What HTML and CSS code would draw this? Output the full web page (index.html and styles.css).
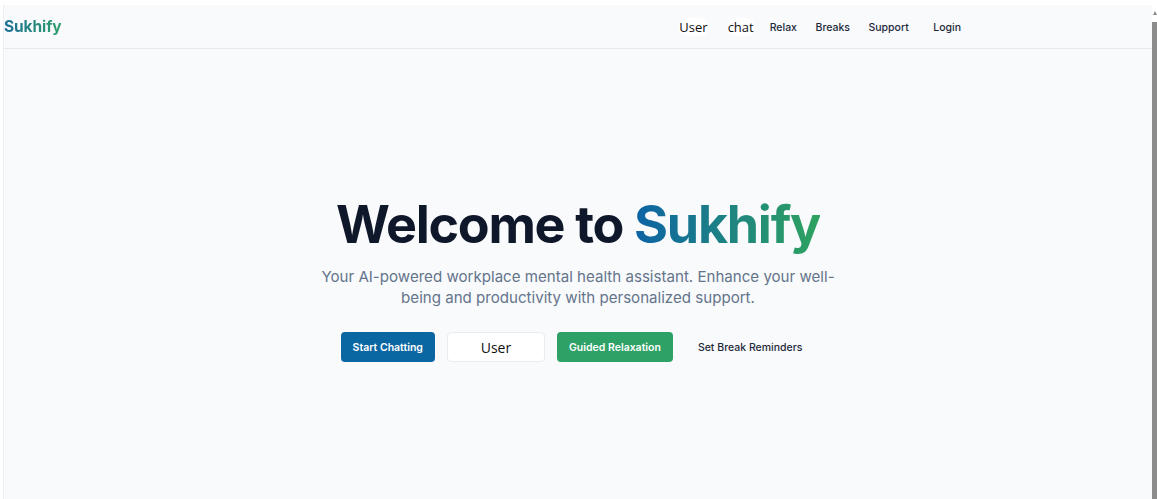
FILE: index.html
```html
<!DOCTYPE html>
<html lang="en">
<head>
<meta charset="utf-8">
<title>Sukhify</title>
<link rel="stylesheet" href="styles.css">
</head>
<body>
<div class="window">
  <div class="page">
    <header class="topbar">
      <a class="logo" href="#">Sukhify</a>
      <nav class="nav">
        <span class="nav-raw">User</span>
        <span class="nav-raw">chat</span>
        <a class="nav-link" href="#">Relax</a>
        <a class="nav-link" href="#">Breaks</a>
        <a class="nav-link" href="#">Support</a>
        <a class="nav-link nav-login" href="#">Login</a>
      </nav>
    </header>
    <main class="hero">
      <h1 class="title">Welcome to <span class="brand">Sukhify</span></h1>
      <p class="lead">Your AI-powered workplace mental health assistant. Enhance your well-being and productivity with personalized support.</p>
      <div class="actions">
        <a class="btn btn-blue" href="#">Start Chatting</a>
        <span class="btn btn-outline"><span class="raw">User</span></span>
        <a class="btn btn-green" href="#">Guided Relaxation</a>
        <a class="btn btn-ghost" href="#">Set Break Reminders</a>
      </div>
    </main>
  </div>
  <div class="scrollbar"><span class="arrow"></span><span class="thumb"></span></div>
</div>
</body>
</html>
```

FILE: styles.css
```css
* { box-sizing: border-box; }
html, body { margin: 0; padding: 0; height: 100%; }
body {
  background: #ffffff;
  font-family: Inter, "Noto Sans", sans-serif;
  overflow: hidden;
}
.window {
  display: flex;
  height: 494px;
  margin-top: 5px;
  padding-left: 3px;
}
.page {
  flex: 1;
  background: #f8fafc;
  border-left: 1px solid #eceef1;
  display: flex;
  flex-direction: column;
}
.topbar {
  height: 44px;
  border-bottom: 1px solid #e6e9ee;
  display: flex;
  align-items: center;
  padding-right: 191px;
}
.logo {
  font-size: 15.5px;
  font-weight: 700;
  text-decoration: none;
  background: linear-gradient(90deg, #1b6e95, #2f9e6b);
  -webkit-background-clip: text;
  background-clip: text;
  color: transparent;
  letter-spacing: -0.1px;
}
.nav {
  margin-left: auto;
  display: flex;
  align-items: center;
  padding-top: 1px;
}
.nav-raw {
  font-family: "Open Sans", "Noto Sans", sans-serif;
  font-size: 13px;
  color: #111;
  background: #fff;
  border-radius: 8px;
  margin-right: 20px;
}
.nav-raw + .nav-raw { margin-right: 16px; }
.nav-link {
  font-size: 10.5px;
  font-weight: 500;
  color: #1e293b;
  text-decoration: none;
  margin-right: 18.5px;
}
.nav-login { margin-left: 6px; margin-right: 0; }
.hero {
  flex: 1;
  display: flex;
  flex-direction: column;
  align-items: center;
  padding-top: 150px;
}
.title {
  margin: 0;
  font-size: 52px;
  line-height: 1;
  font-weight: 700;
  letter-spacing: -1.3px;
  color: #0f172a;
}
.brand {
  background: linear-gradient(90deg, #0d63a5, #2ea35f);
  -webkit-background-clip: text;
  background-clip: text;
  color: transparent;
}
.lead {
  margin: 15px 0 0;
  max-width: 525px;
  text-align: center;
  font-size: 15.1px;
  line-height: 21px;
  color: #64748b;
}
.actions {
  margin-top: 24px;
  display: flex;
  gap: 12px;
}
.btn {
  height: 30px;
  padding: 0 12px;
  display: inline-flex;
  align-items: center;
  justify-content: center;
  border-radius: 4px;
  font-size: 10.5px;
  font-weight: 600;
  text-decoration: none;
}
.btn-blue { background: #0b67a1; color: #fff; }
.btn-green { background: #2ea166; color: #fff; }
.btn-outline {
  width: 98px;
  background: #fff;
  border: 1px solid #e8ebef;
}
.btn-outline .raw {
  font-family: "Open Sans", "Noto Sans", sans-serif;
  font-size: 14px;
  font-weight: 400;
  color: #111;
}
.btn-ghost { color: #1e293b; font-weight: 500; padding: 0 13px; }
.scrollbar {
  width: 5px;
  display: flex;
  flex-direction: column;
  align-items: stretch;
  padding-top: 6px;
}
.arrow {
  width: 0;
  height: 0;
  border-left: 2px solid transparent;
  border-right: 2px solid transparent;
  border-bottom: 4px solid #8a8a8a;
  align-self: center;
}
.thumb {
  flex: 1;
  margin-top: 7px;
  background: #8c8c8c;
}
```
